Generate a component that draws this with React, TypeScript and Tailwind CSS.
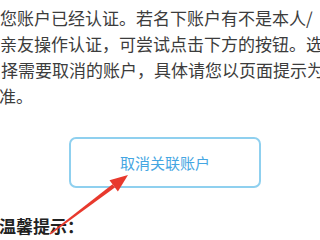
import React from "react";

export default function App() {
  const font = { fontFamily: '"Noto Sans CJK SC", "Noto Sans", sans-serif' };
  return (
    <div className="relative w-[320px] h-[240px] overflow-hidden bg-white" style={font}>
      <div className="pt-[5px] text-[17px] leading-[26px] text-[#3c3c3c] whitespace-nowrap">
        <div className="ml-[0px]">您账户已经认证。若名下账户有不是本人/</div>
        <div className="ml-[0px]">亲友操作认证，可尝试点击下方的按钮。选</div>
        <div className="ml-[1px]">择需要取消的账户，具体请您以页面提示为</div>
        <div className="ml-[-1px]">准。</div>
      </div>
      <div className="ml-[69px] mt-[28px] w-[192px] h-[51px] rounded-[7px] border-2 border-[#8fd0ef] flex items-center justify-center pt-[2px] text-[15px] text-[#45a6e2]">
        取消关联账户
      </div>
      <div className="ml-[-1px] mt-[24px] text-[17px] leading-[28px] font-bold text-[#222] whitespace-nowrap">
        温馨提示：
      </div>
      <svg className="absolute left-0 top-0" width="320" height="240" viewBox="0 0 320 240">
        <polygon points="50.5,234.6 49.5,233.4 112.5,184.3 114.9,187.5" fill="#e8392d" />
        <polygon points="128,175 117.9,191.5 109.5,180.3" fill="#e8392d" />
      </svg>
    </div>
  );
}
